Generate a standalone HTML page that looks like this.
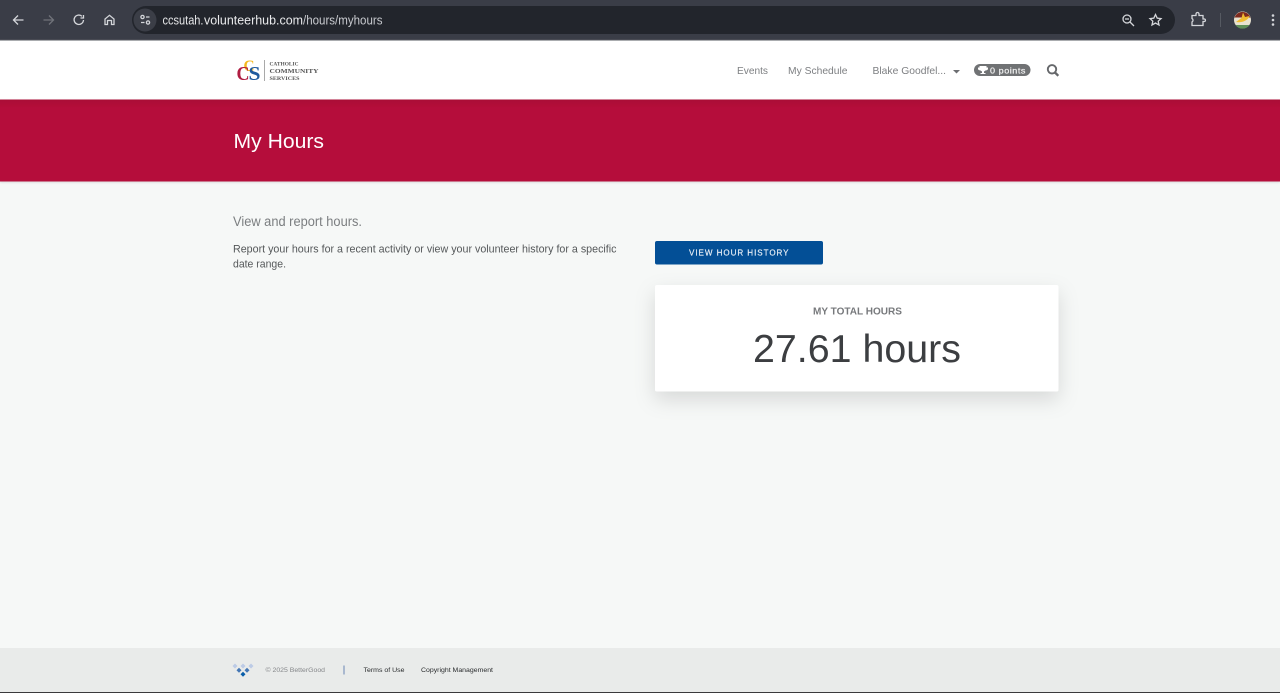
<!DOCTYPE html>
<html lang="en">
<head>
<meta charset="utf-8">
<title>My Hours</title>
<style>
html,body{margin:0;padding:0;background:#f6f8f7;overflow:hidden}
svg{display:block}
text{font-family:"Liberation Sans",sans-serif}
</style>
</head>
<body>
<svg xmlns="http://www.w3.org/2000/svg" width="1280" height="693" viewBox="0 0 1280 693">
<defs>
<filter id="s" x="-20%" y="-40%" width="140%" height="190%"><feDropShadow dx="0" dy="8" stdDeviation="10" flood-color="#000" flood-opacity=".13"/></filter>
<filter id="b" x="-5%" y="-50%" width="110%" height="200%"><feDropShadow dx="0" dy="1" stdDeviation="1" flood-color="#000" flood-opacity=".12"/></filter>
<linearGradient id="g" x1="0" y1="0" x2="0" y2="1"><stop offset="0" stop-color="#aa0836"/><stop offset=".1" stop-color="#b5073a"/><stop offset="1" stop-color="#b5073a"/></linearGradient>
</defs>
<rect width="1280" height="693" fill="#f6f8f7"/>

<!-- browser chrome -->
<rect width="1280" height="40.500" fill="#3a3d47"/>
<rect y="39.500" width="1280" height="1" fill="#55585f"/>
<rect x="132" y="6" width="1043" height="28" rx="14" fill="#22252c"/>
<circle cx="145" cy="20" r="11.500" fill="#3b3e47"/>
<g fill="none" stroke="#d4d6da" stroke-width="1.300">
<path d="M23.500 20H13.500M18 15.500L13.500 20L18 24.500"/>
<path d="M43.500 20H53.500M49 15.500L53.500 20L49 24.500" stroke="#70737a"/>
<path d="M83.500 20A4.700 4.700 0 1 1 82 16.300M83.500 15V18H80.500"/>
<path d="M105 24.500V19L109.500 15.300L114 19V24.500H111.500V20.500H107.500V24.500Z"/>
<circle cx="142.500" cy="17" r="1.600"/><path d="M146 17H149.500M141 22.500H144.500"/><circle cx="148" cy="22.500" r="1.600"/>
<circle cx="1127" cy="19" r="4"/><path d="M1130 22L1134 26M1125 19H1129"/>
<path d="M1155.500 14.500L1157.200 18.200L1161 18.600L1158.200 21.200L1159 25L1155.500 23L1152 25L1152.800 21.200L1150 18.600L1153.800 18.200Z"/>
<path d="M1192 16H1196V14.500A1.500 1.500 0 0 1 1199 14.500V16H1203V19.500H1204.500A1.300 1.300 0 0 1 1204.500 22H1203V26H1192V22.500A2 2 0 0 0 1192 19Z" transform="translate(0 -.5)"/>
</g>
<text x="162.500" y="24.700" font-size="12.800" fill="#e6e7e9" textLength="41" lengthAdjust="spacingAndGlyphs">ccsutah.</text>
<text x="204" y="24.700" font-size="12.800" fill="#e9eaec" textLength="99" lengthAdjust="spacingAndGlyphs">volunteerhub.com</text>
<text x="303" y="24.700" font-size="12.800" fill="#c8cacf" textLength="79.500" lengthAdjust="spacingAndGlyphs">/hours/myhours</text>
<rect x="1220" y="13" width="1" height="14" fill="#565a62"/>
<circle cx="1242.500" cy="20" r="8.500" fill="#e8e2cf"/>
<path d="M1234.500 17.500A8.500 8.500 0 0 1 1250.500 17.500Z" fill="#7e2a1e"/>
<path d="M1235.500 25A8.500 8.500 0 0 0 1249.500 25Z" fill="#5f8f58"/>
<path d="M1236 22C1241 23 1248 21 1249.500 16L1245 17L1243 12.500L1241.500 18Z" fill="#f0bc30"/>
<g fill="#d4d6da"><circle cx="1273" cy="15.500" r="1.300"/><circle cx="1273" cy="20" r="1.300"/><circle cx="1273" cy="24.500" r="1.300"/></g>

<!-- header -->
<rect y="40.500" width="1280" height="59" fill="#fff"/>
<!-- logo -->
<text x="243.500" y="71" font-size="16" fill="#f5b81c" font-weight="bold" textLength="11" lengthAdjust="spacingAndGlyphs" style="font-family:'Liberation Serif',serif">C</text>
<text x="236.500" y="80" font-size="20.500" fill="#b01d42" font-weight="bold" textLength="13" lengthAdjust="spacingAndGlyphs" style="font-family:'Liberation Serif',serif">C</text>
<text x="248.500" y="80" font-size="20.500" fill="#1f5a9e" font-weight="bold" textLength="12" lengthAdjust="spacingAndGlyphs" style="font-family:'Liberation Serif',serif">S</text>
<rect x="264" y="60" width="1" height="21" fill="#a9a9a9"/>
<g fill="#555">
<text x="269.500" y="65.500" font-size="5" font-weight="bold" textLength="29" lengthAdjust="spacingAndGlyphs" style="font-family:'Liberation Serif',serif">CATHOLIC</text>
<text x="269.500" y="72.800" font-size="6" font-weight="bold" textLength="49" lengthAdjust="spacingAndGlyphs" style="font-family:'Liberation Serif',serif">COMMUNITY</text>
<text x="269.500" y="79.800" font-size="5" font-weight="bold" textLength="30" lengthAdjust="spacingAndGlyphs" style="font-family:'Liberation Serif',serif">SERVICES</text>
</g>
<g font-size="10.500" fill="#7d7f82">
<text x="737" y="74" textLength="31" lengthAdjust="spacingAndGlyphs">Events</text>
<text x="788" y="74" textLength="59.500" lengthAdjust="spacingAndGlyphs">My Schedule</text>
<text x="872.500" y="74" textLength="73.500" lengthAdjust="spacingAndGlyphs">Blake Goodfel...</text>
</g>
<path d="M953 70H960L956.500 73.500Z" fill="#6c6e71"/>
<rect x="974" y="64" width="56.500" height="12" rx="6" fill="#707274"/>
<path d="M979.500 66H986.500V67.500H988V68.800C988 70 986.500 70.500 985.500 70.500L984 71.500V73H985.500V74H980.500V73H982V71.500L980.500 70.500C979.500 70.500 978 70 978 68.800V67.500H979.500Z" fill="#fff"/>
<text x="990" y="73.500" font-size="8.500" fill="#f2f2f2" stroke="#f2f2f2" stroke-width=".2" textLength="36" lengthAdjust="spacingAndGlyphs" letter-spacing=".5">0 points</text>
<g fill="none" stroke="#66686b" stroke-width="1.900"><circle cx="1052" cy="69.300" r="4.200"/><path d="M1055 72.500L1058.300 75.800" stroke-width="2.300"/></g>

<!-- banner -->
<rect y="99.500" width="1280" height="82" fill="url(#g)" filter="url(#b)"/>
<text x="233.500" y="148" font-size="20" fill="#fff" textLength="90.500" lengthAdjust="spacingAndGlyphs">My Hours</text>

<!-- content -->
<text x="233" y="226" font-size="13.500" fill="#7b7e80" textLength="129" lengthAdjust="spacingAndGlyphs">View and report hours.</text>
<text x="233" y="252.300" font-size="10.800" fill="#55585a" textLength="383.500" lengthAdjust="spacingAndGlyphs">Report your hours for a recent activity or view your volunteer history for a specific</text>
<text x="233" y="267.300" font-size="10.800" fill="#55585a" textLength="53" lengthAdjust="spacingAndGlyphs">date range.</text>
<rect x="655" y="241" width="168" height="23.500" rx="2" fill="#034f96"/>
<text x="689" y="255.700" font-size="8.500" fill="#eef3f8" stroke="#eef3f8" stroke-width=".15" textLength="100.500" lengthAdjust="spacingAndGlyphs" letter-spacing="1">VIEW HOUR HISTORY</text>
<rect x="655" y="285" width="403.500" height="106.500" rx="2" fill="#fff" filter="url(#s)"/>
<text x="813" y="314.500" font-size="10" font-weight="bold" fill="#77797c" textLength="89" lengthAdjust="spacingAndGlyphs">MY TOTAL HOURS</text>
<text x="753" y="362" font-size="39" fill="#3c3e41" textLength="208" lengthAdjust="spacingAndGlyphs">27.61 hours</text>

<!-- footer -->
<rect y="648" width="1280" height="44" fill="#e9ebea"/>
<rect y="692" width="1280" height="1" fill="#3a3a3c"/>
<g>
<path d="M235 663.500L237.500 666L235 668.500L232.500 666ZM243 663.500L245.500 666L243 668.500L240.500 666ZM251 663.500L253.500 666L251 668.500L248.500 666Z" fill="#bccbe6"/>
<path d="M239 667.700L241.500 670.200L239 672.700L236.500 670.200ZM247 667.700L249.500 670.200L247 672.700L244.500 670.200Z" fill="#4577b5"/>
<path d="M243 671.800L245.500 674.300L243 676.800L240.500 674.300Z" fill="#075da9"/>
</g>
<text x="265.500" y="672" font-size="6.300" fill="#85878a" textLength="59.500" lengthAdjust="spacingAndGlyphs">© 2025 BetterGood</text>
<rect x="343" y="665.500" width="2" height="9" fill="#a9b8cf"/>
<text x="363.500" y="672" font-size="6.300" fill="#2a2c2e" textLength="41" lengthAdjust="spacingAndGlyphs">Terms of Use</text>
<text x="421" y="672" font-size="6.300" fill="#2a2c2e" textLength="72" lengthAdjust="spacingAndGlyphs">Copyright Management</text>
</svg>
</body>
</html>
